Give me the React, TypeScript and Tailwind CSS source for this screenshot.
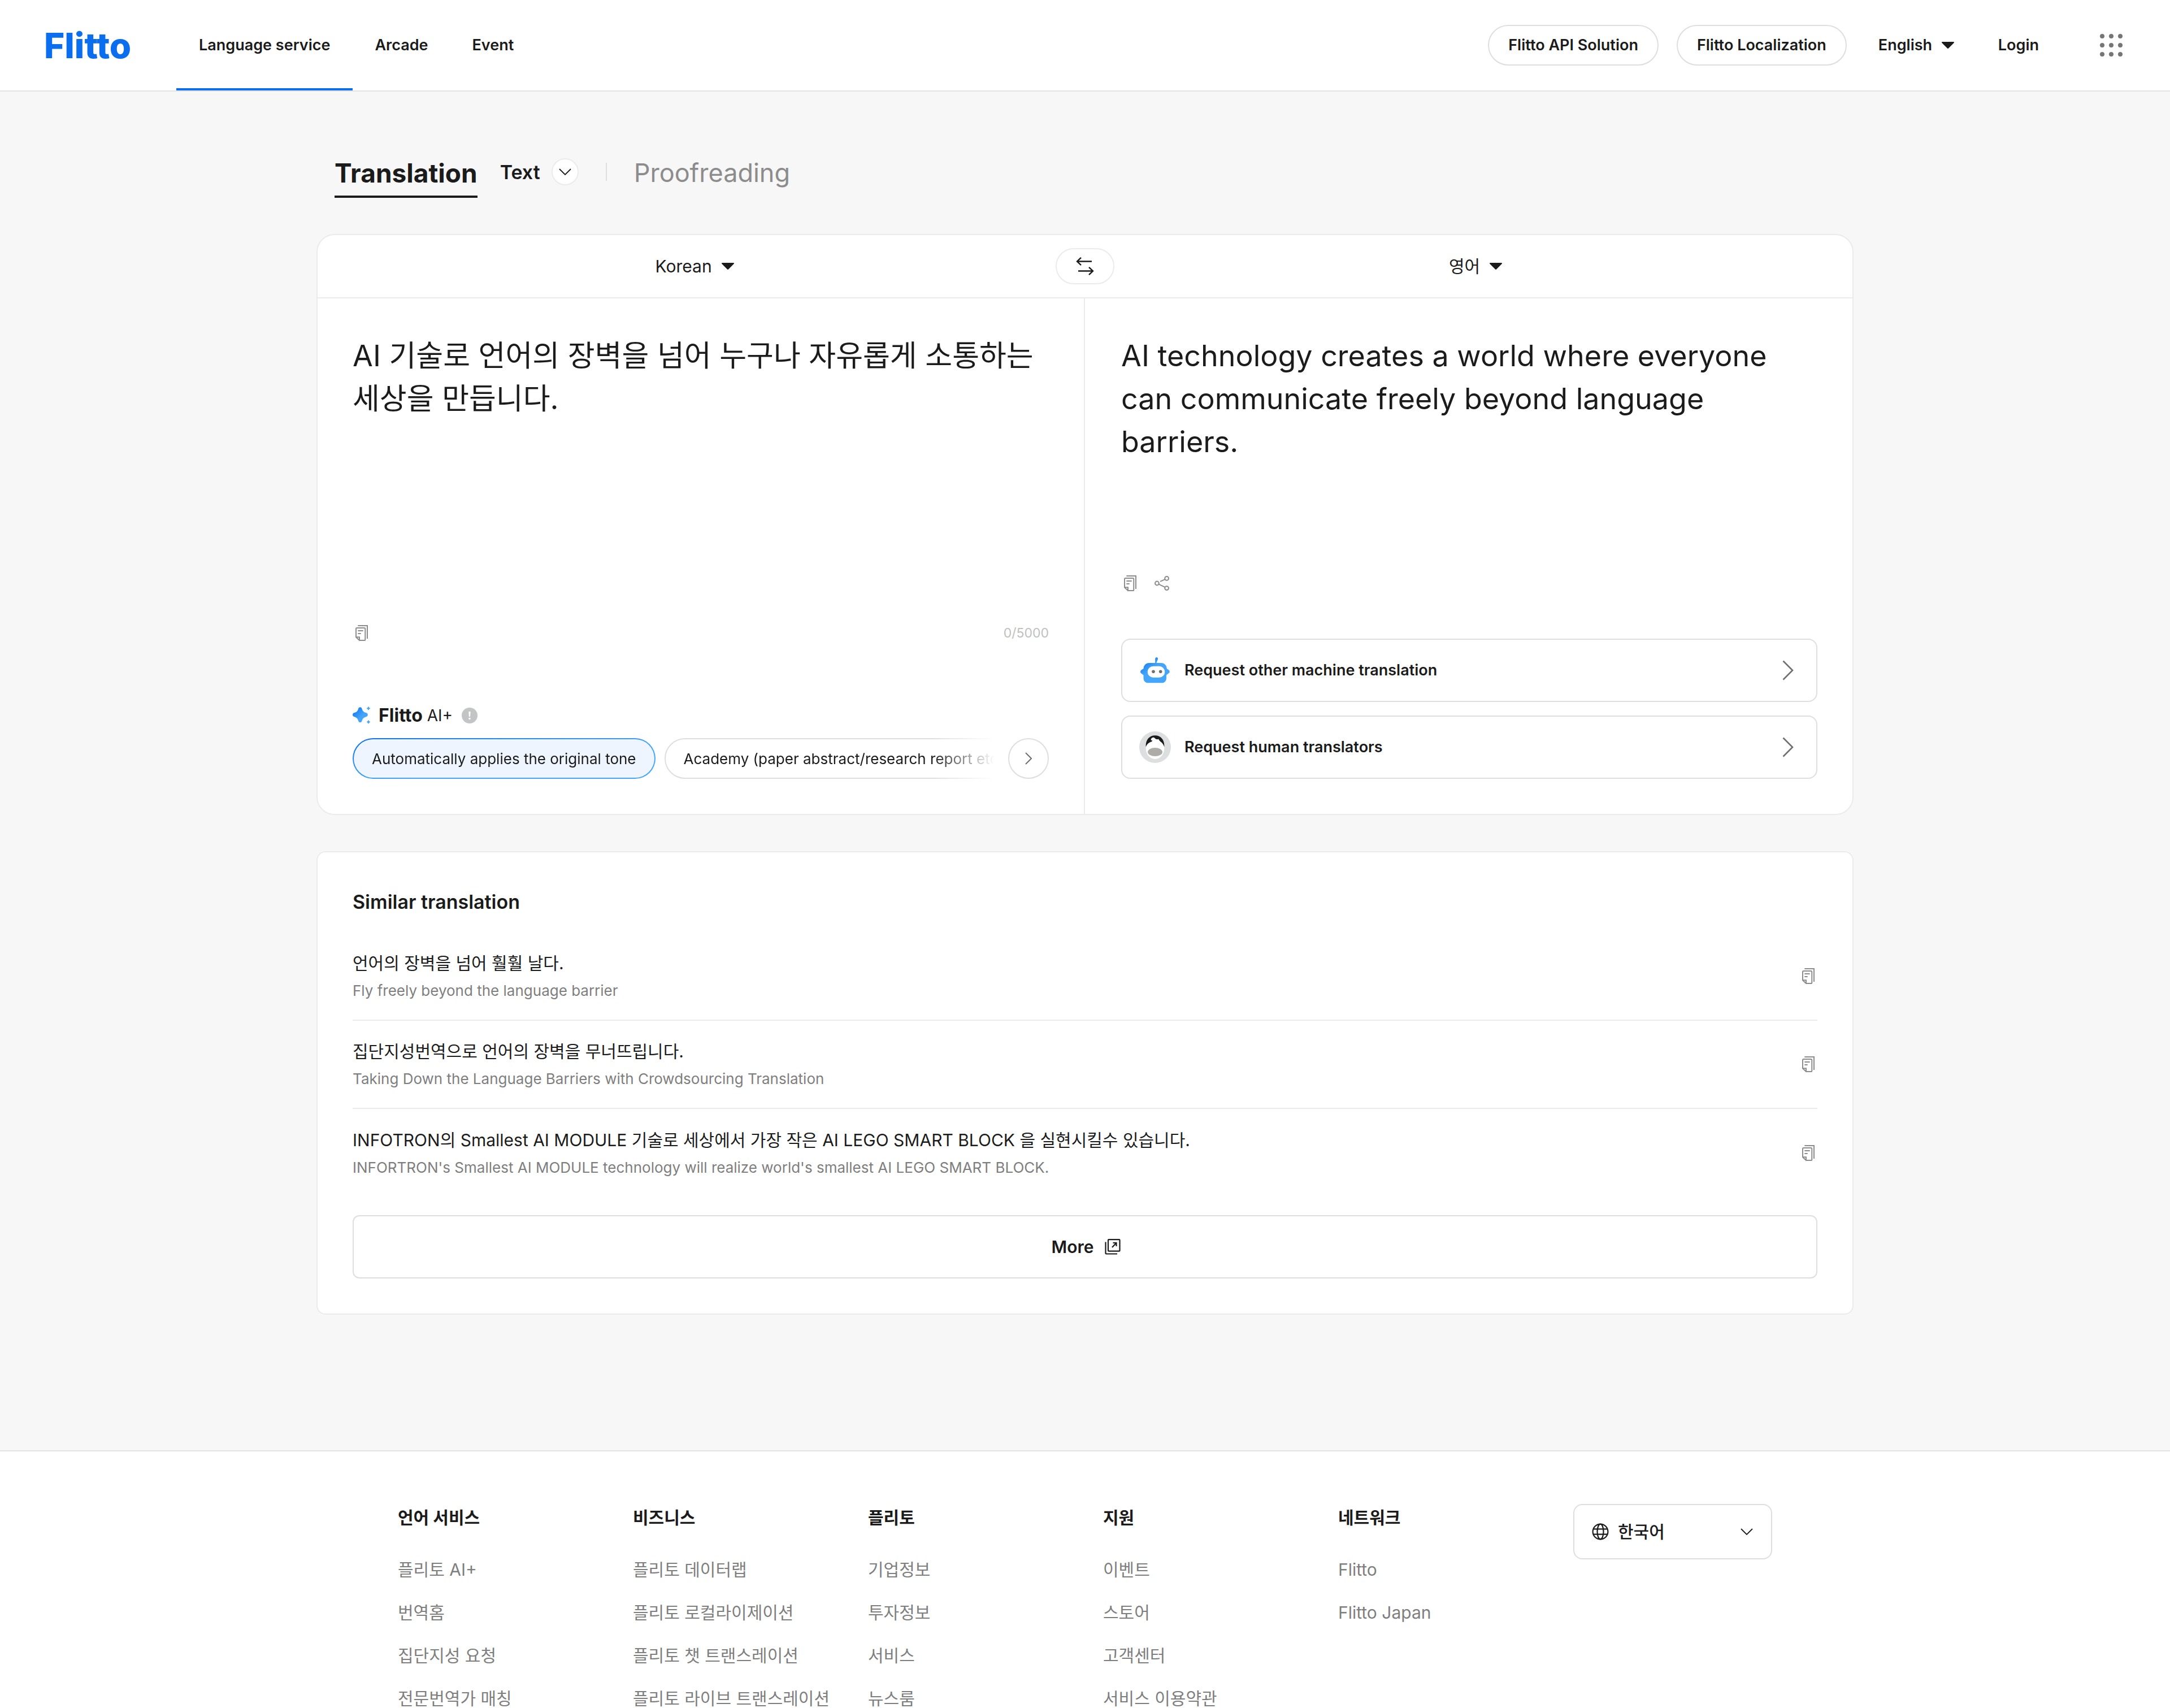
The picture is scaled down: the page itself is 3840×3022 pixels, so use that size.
import React, { useState } from "react";

interface SimilarItem {
  source: string;
  target: string;
}

interface FooterColumn {
  title: string;
  links: string[];
}

const navItems: string[] = ["Language service", "Arcade", "Event"];

const similarItems: SimilarItem[] = [
  {
    source: "언어의 장벽을 넘어 훨훨 날다.",
    target: "Fly freely beyond the language barrier",
  },
  {
    source: "집단지성번역으로 언어의 장벽을 무너뜨립니다.",
    target: "Taking Down the Language Barriers with Crowdsourcing Translation",
  },
  {
    source:
      "INFOTRON의 Smallest AI MODULE 기술로 세상에서 가장 작은 AI LEGO SMART BLOCK 을 실현시킬수 있습니다.",
    target:
      "INFORTRON's Smallest AI MODULE technology will realize world's smallest AI LEGO SMART BLOCK.",
  },
];

const footerColumns: FooterColumn[] = [
  {
    title: "언어 서비스",
    links: ["플리토 AI+", "번역홈", "집단지성 요청", "전문번역가 매칭"],
  },
  {
    title: "비즈니스",
    links: [
      "플리토 데이터랩",
      "플리토 로컬라이제이션",
      "플리토 챗 트랜스레이션",
      "플리토 라이브 트랜스레이션",
    ],
  },
  { title: "플리토", links: ["기업정보", "투자정보", "서비스", "뉴스룸"] },
  { title: "지원", links: ["이벤트", "스토어", "고객센터", "서비스 이용약관"] },
  { title: "네트워크", links: ["Flitto", "Flitto Japan"] },
];

const Caret = () => (
  <svg width="22" height="12" viewBox="0 0 22 12" fill="#1b1b1b" aria-hidden="true">
    <path d="M1 0h20a1 1 0 0 1 .7 1.7L12 11.5a1.4 1.4 0 0 1-2 0L.3 1.7A1 1 0 0 1 1 0z" />
  </svg>
);

const ChevronDown = () => (
  <svg width="24" height="14" viewBox="0 0 24 14" fill="none" stroke="#1b1b1b" strokeWidth="1.8" aria-hidden="true">
    <path d="M2 2l10 10L22 2" />
  </svg>
);

const ChevronRight = () => (
  <svg width="20" height="36" viewBox="0 0 20 36" fill="none" stroke="#6f6f6f" strokeWidth="2.6" aria-hidden="true">
    <path d="M1.5 1.5L18 18 1.5 34.5" />
  </svg>
);

const CopyIcon = () => (
  <svg width="22" height="28" viewBox="0 0 22 28" fill="none" stroke="#8c8c8c" strokeWidth="2" aria-hidden="true">
    <path d="M4.3 1H21v23" />
    <path d="M2.5 5h13.2Q17.3 5 17.3 6.6v18.8q0 1.6-1.6 1.6H7L1 21.3V6.5Q1 5 2.5 5z" />
    <path d="M1 21.3h6V27M4.3 10h9.4M4.3 15h5.4" />
  </svg>
);

const ShareIcon = () => (
  <svg width="26" height="26" viewBox="0 0 26 26" fill="none" stroke="#8c8c8c" strokeWidth="2" aria-hidden="true">
    <circle cx="4.4" cy="13" r="3.4" />
    <circle cx="21.6" cy="4.4" r="3.4" />
    <circle cx="21.6" cy="21.6" r="3.4" />
    <path d="M10 9.8l8.4-3.6M7.5 14.6l10.9 5.2" />
  </svg>
);

const SwapIcon = () => (
  <svg width="32" height="32" viewBox="0 0 32 32" fill="none" stroke="#1b1b1b" strokeWidth="2.4" aria-hidden="true">
    <path d="M28 7.5H2M9 .8L2 7.5l7 6.7" />
    <path d="M4 24.5h26M23 17.8l7 6.7-7 6.7" />
  </svg>
);

const SparkleIcon = () => (
  <svg width="32" height="32" viewBox="0 0 32 32" aria-hidden="true">
    <defs>
      <linearGradient id="sparkle" x1="0" y1="0" x2="1" y2="1">
        <stop offset="0" stopColor="#0b6eee" />
        <stop offset="0.6" stopColor="#43a6fa" />
      </linearGradient>
    </defs>
    <path
      fill="url(#sparkle)"
      d="M13.3 1.3c1.7 0 2.8 1 3.2 2.6 1 4 3.2 6 7.2 7.2 2 .6 3.1 1.8 3.1 3.6s-1.1 3-3.1 3.6c-4 1.1-6.2 3.2-7.2 7.2-.4 1.6-1.5 2.6-3.2 2.6s-2.8-1-3.2-2.6c-1-4-3.2-6.1-7-7.2C1 17.7 0 16.5 0 14.7s1-3 3.1-3.6c3.8-1.2 6-3.2 7-7.2.4-1.6 1.5-2.6 3.2-2.6z"
    />
    <path
      fill="#43a6fa"
      stroke="#43a6fa"
      strokeLinejoin="round"
      d="M28 .5c1 2 1 2 2.8 2.8C29 4.2 29 4.2 28 6.2c-1-2-1-2-2.8-2.9C27 2.5 27 2.5 28 .5zM28 24.5c1 2 1 2 2.8 2.8-1.8.9-1.8.9-2.8 2.9-1-2-1-2-2.8-2.9 1.8-.8 1.8-.8 2.8-2.8z"
    />
  </svg>
);

const InfoIcon = () => (
  <svg width="28" height="28" viewBox="0 0 28 28" aria-hidden="true">
    <circle cx="14" cy="14" r="14" fill="#c2c4c6" />
    <path d="M12.4 7h3.2l-.5 9h-2.2z" fill="#fff" />
    <circle cx="14" cy="19.5" r="1.8" fill="#fff" />
  </svg>
);

const RobotIcon = () => (
  <svg width="56" height="56" viewBox="0 0 56 56" aria-hidden="true">
    <defs>
      <linearGradient id="robot" x1="0.1" y1="0" x2="0.7" y2="0.7">
        <stop offset="0" stopColor="#0b6eee" />
        <stop offset="0.6" stopColor="#43a6fa" />
      </linearGradient>
    </defs>
    <path
      fill="url(#robot)"
      d="M28.2 16V7.5C28.2 6 29.4 5 30.8 5s2.5 1.2 2.3 2.8c-.2 2.2-2 4-2.7 7.2h8.6c6 0 9.5 4.5 9.8 10l3.5 2.6c2 1.7 2 3.9 0 5.5L48 36.5V42c0 5-3.5 8.3-8 8.3H16c-5 0-8.5-3.3-8.5-8.3v-5.5l-4-3c-2-1.7-2-4.2 0-5.9L7.5 25c.3-5.5 4-10 10-10h10.7z"
    />
    <rect x="14.7" y="20.7" width="30.6" height="20" rx="10" fill="#fff" />
    <circle cx="25" cy="30.3" r="2.8" fill="#6f6f6f" />
    <circle cx="37.7" cy="30.3" r="2.8" fill="#6f6f6f" />
  </svg>
);

const PersonIcon = () => (
  <svg width="56" height="56" viewBox="0 0 56 56" aria-hidden="true">
    <circle cx="28" cy="28" r="28" fill="#dcdee0" />
    <ellipse cx="28" cy="30" rx="16.3" ry="19" fill="#fff" />
    <path
      fill="#1b1b1b"
      d="M11.7 27.5C11 15 18 7.3 28 7.3S45 15 44.3 27.5c-1-3-2.5-6-5-8-2.8-2-4.3-3.8-5.3-6-2.3 1.5-4.8.5-6.5-1.5-1.5-1.5-4-2-6 .5-1 1.3-1 2.5-.5 3.5l2-.5-.5 2.5c-5 1-9 5-10.8 9.5z"
    />
    <ellipse cx="28" cy="36.5" rx="13" ry="7.6" fill="#adaca8" />
  </svg>
);

const ExternalIcon = () => (
  <svg width="28" height="28" viewBox="0 0 28 28" fill="none" stroke="#1b1b1b" strokeWidth="2.2" aria-hidden="true">
    <rect x="6" y="1.2" width="20.5" height="20.5" rx="1" />
    <path d="M1.5 5.5v20q0 1 1 1h19.5" />
    <path d="M13 15l7.5-8M14.5 7h6v6" />
  </svg>
);

const GlobeIcon = () => (
  <svg width="30" height="30" viewBox="0 0 30 30" fill="none" stroke="#1b1b1b" strokeWidth="2.2" aria-hidden="true">
    <circle cx="15" cy="15" r="13.4" />
    <ellipse cx="15" cy="15" rx="5.5" ry="13.4" />
    <path d="M3 10.3h24M3 19.7h24" />
  </svg>
);

const dots = [4, 20, 36];

const Header = () => {
  return (
    <header className="flex items-stretch justify-between border-b-2 border-[#e4e4e4] bg-white pr-20 pl-[78px]">
      <div className="flex items-stretch">
        <a href="#" className="flex w-[234px] items-center text-[62px] font-extrabold text-[#0b6eee]">
          Flitto
        </a>
        <nav className="flex h-40 items-stretch text-[27px] font-semibold">
          {navItems.map((item, index) => (
            <a
              key={item}
              href="#"
              className={
                index === 0
                  ? "flex items-center border-y-4 border-t-transparent border-b-[#0b6eee] px-10"
                  : "flex items-center px-[39px]"
              }
            >
              {item}
            </a>
          ))}
        </nav>
      </div>
      <div className="flex items-center text-[27px] font-semibold">
        <a href="#" className="mr-8 flex h-[72px] items-center rounded-full border-2 border-[#dedede] px-[34px]">
          Flitto API Solution
        </a>
        <a href="#" className="mr-14 flex h-[72px] items-center rounded-full border-2 border-[#dedede] px-[34px]">
          Flitto Localization
        </a>
        <label className="mr-[78px] flex items-center gap-4">
          <select aria-label="Site language" className="appearance-none bg-transparent">
            <option>English</option>
          </select>
          <Caret />
        </label>
        <a href="#" className="mr-[104px]">
          Login
        </a>
        <button type="button" aria-label="All services">
          <svg width="48" height="48" viewBox="-4 -4 48 48" fill="#757575" aria-hidden="true">
            {dots.map((y) => dots.map((x) => <circle key={`${x}-${y}`} cx={x} cy={y} r="4" />))}
          </svg>
        </button>
      </div>
    </header>
  );
};

const ServiceTabs = () => {
  return (
    <div className="flex items-center px-8 pt-24">
      <a
        href="#"
        className="border-t-8 border-b-4 border-t-transparent border-b-[#1b1b1b] text-[46px] leading-[80px] font-bold"
      >
        Translation
      </a>
      <button type="button" className="ml-10 flex items-center gap-5 text-[34px] font-semibold">
        Text
        <span className="flex size-12 items-center justify-center rounded-full border-2 border-[#ebebeb] bg-white">
          <ChevronDown />
        </span>
      </button>
      <span className="mx-12 h-8 w-0.5 bg-[#dedede]" />
      <a href="#" className="border-t-8 border-b-4 border-transparent text-[45px] leading-[80px] text-[#8c8c8c]">
        Proofreading
      </a>
    </div>
  );
};

const Translator = () => {
  const [text, setText] = useState<string>(
    "AI 기술로 언어의 장벽을 넘어 누구나 자유롭게 소통하는 세상을 만듭니다."
  );

  return (
    <section className="mt-16 overflow-hidden rounded-[32px] border-2 border-[#ebebeb] bg-white">
      <div className="flex h-28 items-center border-b-2 border-[#ebebeb] text-[30px]">
        <label className="flex flex-1 items-center justify-center gap-4 pl-7">
          <select aria-label="Source language" className="appearance-none bg-transparent">
            <option>Korean</option>
          </select>
          <Caret />
        </label>
        <button
          type="button"
          aria-label="Swap languages"
          className="flex h-16 w-[104px] items-center justify-center rounded-full border-2 border-[#ebebeb]"
        >
          <SwapIcon />
        </button>
        <label className="flex flex-1 items-center justify-center gap-4 pr-7">
          <select aria-label="Target language" className="appearance-none bg-transparent">
            <option>영어</option>
          </select>
          <Caret />
        </label>
      </div>

      <div className="grid grid-cols-2">
        <div className="flex flex-col border-r-2 border-[#ebebeb] px-[62px] pt-16 pb-[62px]">
          <textarea
            aria-label="Source text"
            value={text}
            onChange={(e) => setText(e.target.value)}
            rows={6}
            className="resize-none text-[52px] leading-[76px] break-keep outline-none"
          />
          <div className="mt-14 flex items-center justify-between pl-[5px]">
            <button type="button" aria-label="Copy source text">
              <CopyIcon />
            </button>
            <span className="text-[23px] leading-8 text-[#bfbfbf]">0/5000</span>
          </div>
          <div className="mt-auto flex items-center">
            <SparkleIcon />
            <span className="ml-3.5 text-[32px] leading-10 font-bold">Flitto</span>
            <span className="ml-2 text-[28px] leading-10">AI+</span>
            <button type="button" aria-label="About AI+" className="ml-4">
              <InfoIcon />
            </button>
          </div>
          <div className="mt-5 flex items-center gap-6 text-[26px]">
            <div className="flex min-w-0 flex-1 gap-4 overflow-hidden whitespace-nowrap [mask-image:linear-gradient(to_right,black_calc(100%_-_112px),transparent)]">
              <button
                type="button"
                className="h-[72px] shrink-0 rounded-full bg-linear-to-br from-[#0b6eee] to-[#43a6fa] to-60% p-0.5"
              >
                <span className="flex h-full items-center rounded-full bg-[#eff5ff] px-8">
                  Automatically applies the original tone
                </span>
              </button>
              <button type="button" className="h-[72px] shrink-0 rounded-full border-2 border-[#dedede] px-8">
                Academy (paper abstract/research report etc.)
              </button>
            </div>
            <button
              type="button"
              aria-label="More tones"
              className="flex size-[72px] items-center justify-center rounded-full border-2 border-[#dedede]"
            >
              <svg width="12" height="22" viewBox="0 0 12 22" fill="none" stroke="#6f6f6f" strokeWidth="2" aria-hidden="true">
                <path d="M1 1l10 10L1 21" />
              </svg>
            </button>
          </div>
        </div>

        <div className="flex flex-col pt-16 pr-[62px] pb-[62px] pl-16">
          <p className="min-h-[426px] text-[52px] leading-[76px]">
            AI technology creates a world where everyone can communicate freely beyond language barriers.
          </p>
          <div className="flex h-7 items-center gap-8 px-[5px]">
            <button type="button" aria-label="Copy translation">
              <CopyIcon />
            </button>
            <button type="button" aria-label="Share translation">
              <ShareIcon />
            </button>
          </div>
          <div className="mt-auto flex flex-col gap-6 pt-[84px] text-[27px] font-semibold">
            <button type="button" className="flex h-28 items-center rounded-2xl border-2 border-[#dedede] pr-10 pl-[30px]">
              <RobotIcon />
              <span className="ml-6 flex-1 text-left">Request other machine translation</span>
              <ChevronRight />
            </button>
            <button type="button" className="flex h-28 items-center rounded-2xl border-2 border-[#dedede] pr-10 pl-[30px]">
              <PersonIcon />
              <span className="ml-6 flex-1 text-left">Request human translators</span>
              <ChevronRight />
            </button>
          </div>
        </div>
      </div>
    </section>
  );
};

const SimilarTranslation = () => {
  return (
    <section className="mt-16 rounded-2xl border-2 border-[#ebebeb] bg-white p-[62px]">
      <h2 className="text-[34px] leading-[52px] font-semibold">Similar translation</h2>
      <ul className="mt-7 divide-y-2 divide-[#ebebeb]">
        {similarItems.map((item) => (
          <li key={item.target} className="flex h-[156px] items-center justify-between pr-[5px]">
            <div>
              <p className="text-[30px] leading-[48px]">{item.source}</p>
              <p className="mt-1 text-[26px] leading-[42px] text-[#7e7e7e]">{item.target}</p>
            </div>
            <button type="button" aria-label="Copy">
              <CopyIcon />
            </button>
          </li>
        ))}
      </ul>
      <button
        type="button"
        className="mt-8 flex h-28 w-full items-center justify-center gap-5 rounded-xl border-2 border-[#dedede] pl-1 text-[30px] font-semibold"
      >
        More
        <ExternalIcon />
      </button>
    </section>
  );
};

const Footer = () => {
  return (
    <footer className="mt-60 flex-1 border-t-2 border-[#e4e4e4] bg-white px-8 pt-[93px]">
      <div className="mx-auto grid max-w-[2432px] grid-cols-6 gap-16">
        {footerColumns.map((column) => (
          <div key={column.title} className="whitespace-nowrap">
            <h3 className="text-[30px] leading-[48px] font-bold">{column.title}</h3>
            <ul className="mt-[50px] flex flex-col gap-10 text-[30px] leading-[36px] text-[#7e7e7e]">
              {column.links.map((link) => (
                <li key={link}>
                  <a href="#">{link}</a>
                </li>
              ))}
            </ul>
          </div>
        ))}
        <label className="flex h-[98px] items-center rounded-2xl border-2 border-[#dedede] px-[31px]">
          <GlobeIcon />
          <select aria-label="언어 선택" className="ml-4 flex-1 appearance-none bg-transparent text-[30px] font-medium">
            <option>한국어</option>
          </select>
          <ChevronDown />
        </label>
      </div>
    </footer>
  );
};

const App = () => {
  return (
    <div className="flex min-h-screen flex-col bg-[#f7f7f7] font-['Inter','Noto_Sans_CJK_KR',sans-serif] text-[#1b1b1b]">
      <Header />
      <main className="mx-auto w-full max-w-[2720px]">
        <ServiceTabs />
        <Translator />
        <SimilarTranslation />
      </main>
      <Footer />
    </div>
  );
};

export default App;
